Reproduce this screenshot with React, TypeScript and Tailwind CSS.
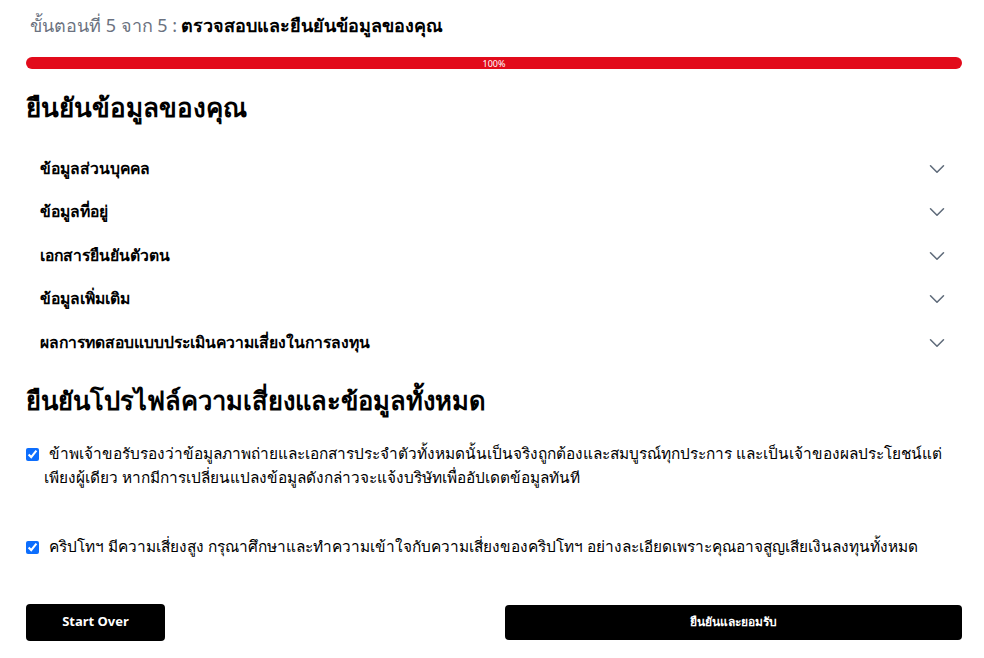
import { ChevronDown } from "lucide-react";

const sections = [
  "ข้อมูลส่วนบุคคล",
  "ข้อมูลที่อยู่",
  "เอกสารยืนยันตัวตน",
  "ข้อมูลเพิ่มเติม",
  "ผลการทดสอบแบบประเมินความเสี่ยงในการลงทุน",
];

const consents = [
  "ข้าพเจ้าขอรับรองว่าข้อมูลภาพถ่ายและเอกสารประจำตัวทั้งหมดนั้นเป็นจริงถูกต้องและสมบูรณ์ทุกประการ และเป็นเจ้าของผลประโยชน์แต่เพียงผู้เดียว หากมีการเปลี่ยนแปลงข้อมูลดังกล่าวจะแจ้งบริษัทเพื่ออัปเดตข้อมูลทันที",
  "คริปโทฯ มีความเสี่ยงสูง กรุณาศึกษาและทำความเข้าใจกับความเสี่ยงของคริปโทฯ อย่างละเอียดเพราะคุณอาจสูญเสียเงินลงทุนทั้งหมด",
];

export default function App() {
  return (
    <div
      className="min-h-screen bg-white pl-[26px] pr-[22px] text-black"
      style={{ fontFamily: '"Noto Sans", "Open Sans", sans-serif' }}
    >
      <div className="flex items-baseline gap-1 pt-[12px] pl-[4px]">
        <span className="text-[18px] text-[#6b7280]">ขั้นตอนที่ 5 จาก 5 :</span>
        <span className="text-[18px] font-bold">ตรวจสอบและยืนยันข้อมูลของคุณ</span>
      </div>

      <div className="mt-[18px] flex h-[12px] items-center justify-center rounded-full bg-[#e20b1b]">
        <span className="text-[9px] leading-none text-white">100%</span>
      </div>

      <h1 className="mt-[20px] text-[26px] font-bold leading-[36px]">ยืนยันข้อมูลของคุณ</h1>

      <div className="mt-[22px]">
        {sections.map((s) => (
          <div
            key={s}
            className="flex h-[43.5px] items-center justify-between pl-[14px] pr-[12px]"
          >
            <span className="text-[15.7px] font-semibold">{s}</span>
            <ChevronDown className="h-[26px] w-[26px] text-[#5f6b7a]" strokeWidth={1.4} />
          </div>
        ))}
      </div>

      <h2 className="mt-[17px] text-[25.5px] font-bold leading-[36px]">
        ยืนยันโปรไฟล์ความเสี่ยงและข้อมูลทั้งหมด
      </h2>

      <div className="mt-[24px] flex flex-col gap-[45px]">
        {consents.map((c) => (
          <label key={c} className="flex items-start gap-[5px] text-[15.4px] leading-[24px]">
            <input
              type="checkbox"
              defaultChecked
              className="mt-[6px] h-[13px] w-[13px] shrink-0 accent-[#0d6efd]"
            />
            <span className="indent-[5px]">{c}</span>
          </label>
        ))}
      </div>

      <div className="mt-[45px] flex items-center justify-between">
        <button className="h-[37px] w-[139px] rounded-[4px] bg-black text-[13px] font-bold text-white">
          Start Over
        </button>
        <button className="h-[35px] w-[457px] rounded-[4px] bg-black text-[12px] font-bold text-white">
          ยืนยันและยอมรับ
        </button>
      </div>
    </div>
  );
}
